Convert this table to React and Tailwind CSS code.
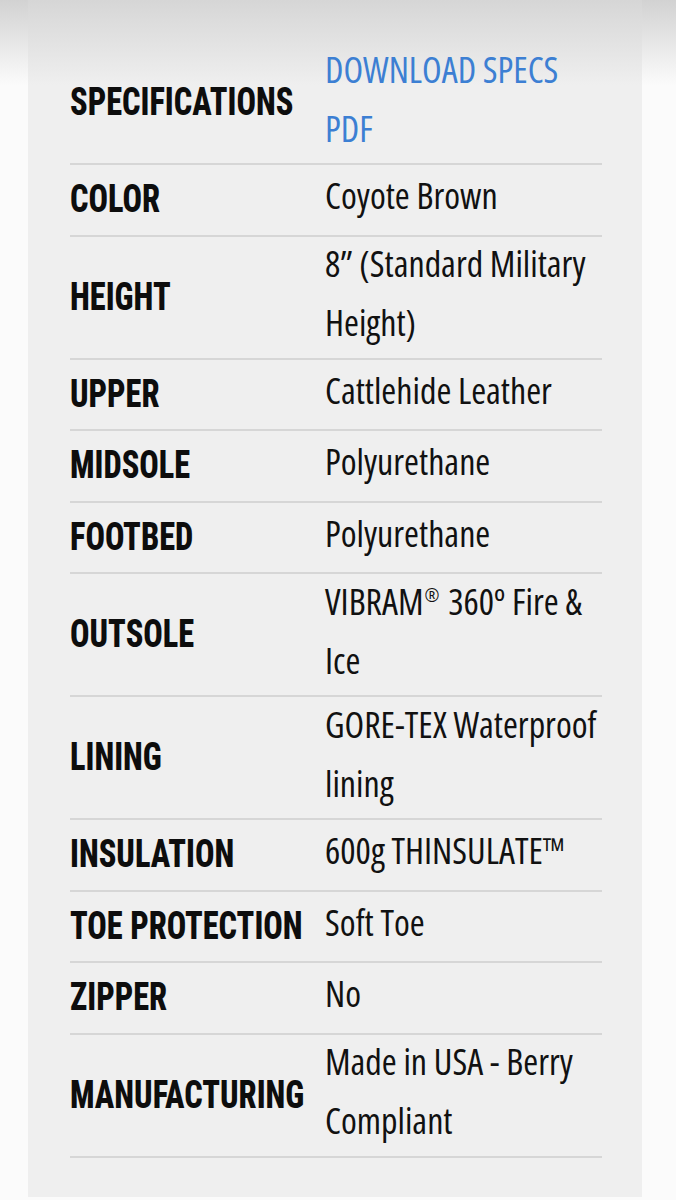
const specs = [
  { label: 'COLOR', value: 'Coyote Brown' },
  { label: 'HEIGHT', value: '8” (Standard Military Height)' },
  { label: 'UPPER', value: 'Cattlehide Leather' },
  { label: 'MIDSOLE', value: 'Polyurethane' },
  { label: 'FOOTBED', value: 'Polyurethane' },
  { label: 'OUTSOLE', value: <>VIBRAM<sup className="text-[18px] top-[-0.7em] ml-px mr-[2px]">®</sup> 360º Fire &amp; Ice</> },
  { label: 'LINING', value: 'GORE-TEX Waterproof lining' },
  { label: 'INSULATION', value: '600g THINSULATE™' },
  { label: 'TOE PROTECTION', value: 'Soft Toe' },
  { label: 'ZIPPER', value: 'No' },
  { label: 'MANUFACTURING', value: 'Made in USA - Berry Compliant' },
];

function SpecRow({ label, children }) {
  return (
    <div className="grid grid-cols-[255px_1fr] items-center min-h-[71.5px] py-[1.5px] border-b-2 border-[#d6d6d6]">
      <span className="font-['Roboto',sans-serif] font-stretch-condensed font-extrabold text-[39px] leading-none text-[#0d0d0d] whitespace-nowrap inline-block origin-left scale-x-[0.83]">
        {label}
      </span>
      <div className="relative -top-[4px] font-['Open_Sans',sans-serif] font-stretch-condensed text-[36px] leading-[59px] text-[#111]">
        {children}
      </div>
    </div>
  );
}

export default function App() {
  return (
    <div className="h-[1200px] w-[676px] bg-[linear-gradient(to_bottom,#d2d2d2,#fbfbfb_85px)]">
      <div className="ml-[28px] w-[614px] h-[1197px] bg-[linear-gradient(to_bottom,#d6d6d6,#efefef_85px)] pt-[42px] pl-[42px] pr-[40px]">
        <SpecRow label="SPECIFICATIONS">
          <a href="#" className="uppercase text-[#3c7fd3]">Download Specs PDF</a>
        </SpecRow>
        {specs.map(s => (
          <SpecRow key={s.label} label={s.label}>{s.value}</SpecRow>
        ))}
      </div>
    </div>
  );
}
